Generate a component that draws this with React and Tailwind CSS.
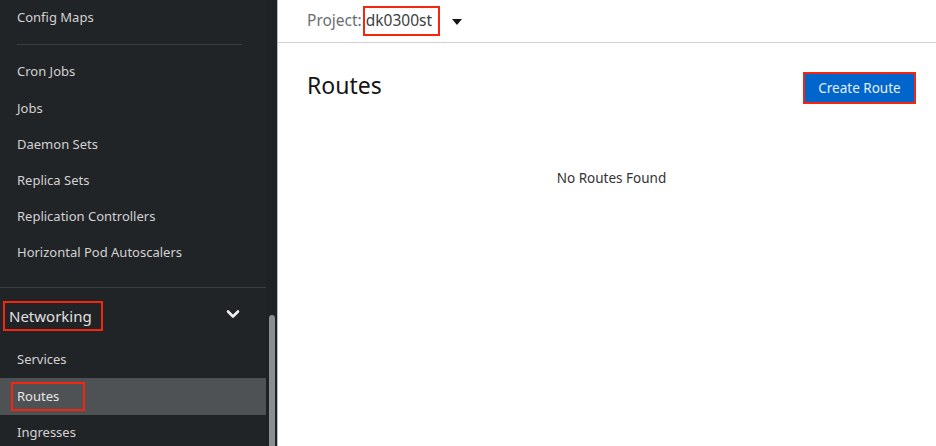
const font = { fontFamily: '"Noto Sans", "Open Sans", sans-serif' };

const NavItem = ({ children }) => (
  <div className="flex h-[36.2px] shrink-0 items-center pl-[17px] text-[13px] text-[#d2d2d2]">
    {children}
  </div>
);

const App = () => {
  return (
    <div
      className="flex h-[446px] w-[936px] overflow-hidden bg-white"
      style={font}
    >
      {/* Sidebar */}
      <div className="flex h-full w-[266px] shrink-0 flex-col bg-[#212427]">
        <div className="flex h-9 shrink-0 items-center pl-[17px] text-[13px] text-[#d2d2d2]">
          Config Maps
        </div>
        <div className="mx-[17px] mt-2 mb-[9px] h-px w-[225px] shrink-0 bg-[#3a3d41]" />
        <NavItem>Cron Jobs</NavItem>
        <NavItem>Jobs</NavItem>
        <NavItem>Daemon Sets</NavItem>
        <NavItem>Replica Sets</NavItem>
        <NavItem>Replication Controllers</NavItem>
        <NavItem>Horizontal Pod Autoscalers</NavItem>
        <div className="mt-[16px] h-px w-full shrink-0 bg-[#3a3d41]" />
        <div className="flex h-[54px] shrink-0 items-center justify-between pl-[3px] pr-[26px]">
          <span className="mt-[2px] border-2 border-[#f5260f] py-[2px] pl-[4px] pr-[9px] text-[15px] text-[#e0e0e0]">
            Networking
          </span>
          <svg width="14" height="10" viewBox="0 0 14 10" className="mt-[-3px]">
            <path
              d="M2 2.5 L7 7.5 L12 2.5"
              fill="none"
              stroke="#f0f0f0"
              strokeWidth="2.6"
              strokeLinecap="round"
              strokeLinejoin="round"
            />
          </svg>
        </div>
        <NavItem>Services</NavItem>
        <div className="flex h-[36.2px] shrink-0 items-center bg-[#4f5255] pl-[11px]">
          <span className="border-2 border-[#f5260f] py-[3px] pl-[4px] pr-[24px] text-[13px] text-[#e6e6e6]">
            Routes
          </span>
        </div>
        <NavItem>Ingresses</NavItem>
      </div>

      {/* Scrollbar track */}
      <div className="flex h-full w-[11px] shrink-0 flex-col bg-[#1f2225] pt-[315px] pl-[3px]">
        <div className="w-[6px] flex-1 rounded-t-full bg-[#8b8e91]" />
      </div>
      <div className="h-full w-px shrink-0 bg-[#b8bbbe]" />

      {/* Main */}
      <div className="flex h-full flex-1 flex-col">
        <div className="flex h-[43px] shrink-0 items-center border-b border-[#d2d2d2] pl-[29px]">
          <span className="text-[15.5px] text-[#6a6e73]">Project:</span>
          <span className="ml-px border-2 border-[#f5260f] py-[1px] pl-px pr-[6px] text-[15.5px] text-[#3c3f42]">
            dk0300st
          </span>
          <svg width="10" height="6" viewBox="0 0 10 6" className="ml-[12px] mt-[1px]">
            <path d="M0 0 L10 0 L5 6 Z" fill="#151515" />
          </svg>
        </div>
        <div className="flex items-start justify-between pl-[29px] pr-[20px]">
          <h1 className="mt-[26px] text-[23px] leading-8 text-[#151515]">Routes</h1>
          <button className="mt-[29px] h-[32px] w-[113px] border-2 border-[#f5260f] bg-[#0066cc] text-[13.5px] text-[#e6eefa]">
            Create Route
          </button>
        </div>
        <div className="mt-[64px] pl-[9px] text-center text-[13.5px] text-[#333]">
          No Routes Found
        </div>
      </div>
    </div>
  );
};

export default App;
